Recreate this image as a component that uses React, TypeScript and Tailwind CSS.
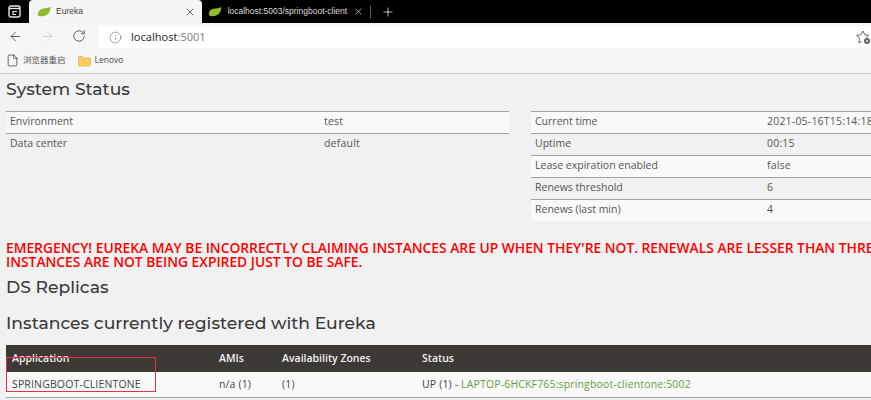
import { ArrowLeft, ArrowRight, RotateCw, Info, File, X, Plus } from 'lucide-react'

function SpringLeaf() {
  return (
    <svg width="14" height="11" viewBox="0 0 14 11">
      <path d="M13.500 .5c.3 3.500-1 7-4.500 8.800-2.500 1.300-5.500 1.200-7.800.4C.3 7 1.500 4 4.800 2.900 7.800 1.900 11.500 2.600 13.500 .5z" fill="#8fbb2e" />
    </svg>
  )
}

function TabActions() {
  return (
    <svg width="13" height="13" viewBox="0 0 13 13" fill="none" stroke="#e8e8e8" strokeWidth="1.400">
      <rect x="1" y="1" width="11" height="11" rx="2" />
      <path d="M1 3.500h11" />
      <path d="M9 6.500H5v3h3" strokeWidth="1.200" />
    </svg>
  )
}

function FavStar() {
  return (
    <svg width="15" height="15" viewBox="0 0 15 15" fill="none">
      <path d="M7 1l1.800 3.800 4 .6-2.800 2.800M5.500 11.500l-2.600 1.400.7-4.300L.8 5.400l4-.6L7 1" stroke="#666" strokeWidth="1" />
      <circle cx="11" cy="11" r="3" fill="#666" />
      <circle cx="11" cy="11" r="1" fill="#eee" />
    </svg>
  )
}

function Row({ label, value, odd, wide }: { label: string; value: string; odd: boolean; wide?: boolean }) {
  return (
    <div className={`flex h-[22px] items-center border-t border-[#a0a0a0] pb-[2px] pl-1 text-[10.5px] text-[#555] ${odd ? 'bg-[#f9f9f9]' : ''}`}>
      <span className={wide ? 'w-[232px] shrink-0' : 'w-[314px] shrink-0'}>{label}</span>
      <span className="whitespace-nowrap tracking-[0.2px]">{value}</span>
    </div>
  )
}

export default function App() {
  return (
    <div className="flex h-[400px] w-[871px] flex-col overflow-hidden bg-[#f1f1f1]">
      {/* browser chrome */}
      <div className="flex h-[23px] shrink-0 items-end bg-black font-['Liberation_Sans',sans-serif]">
        <div className="flex h-[23px] w-[29px] items-center justify-center">
          <TabActions />
        </div>
        <div className="flex h-[23px] w-[173px] items-center rounded-t-[4px] bg-[#f5f5f5] pl-[8px] pr-[6px]">
          <SpringLeaf />
          <span className="ml-[5px] flex-1 text-[8.5px] text-[#444]">Eureka</span>
          <X size={12} strokeWidth={1.5} className="text-[#333]" />
        </div>
        <div className="flex h-[23px] w-[169px] items-center pl-[6px]">
          <SpringLeaf />
          <span className="ml-[6px] w-[125px] overflow-hidden whitespace-nowrap text-[8.5px] text-[#ddd]">localhost:5003/springboot-client</span>
          <X size={11} strokeWidth={1.5} className="ml-[4px] text-[#ddd]" />
          <div className="ml-[6px] h-[14px] w-px bg-[#555]" />
        </div>
        <div className="flex h-[23px] items-center pl-[10px]">
          <Plus size={14} strokeWidth={1.3} className="text-[#eee]" />
        </div>
      </div>

      <div className="flex h-[25px] shrink-0 items-end bg-[#f6f6f6] font-['Noto_Sans',sans-serif]">
        <div className="flex h-[25px] items-center pt-[1px]">
          <ArrowLeft size={15} strokeWidth={1.3} className="ml-[8px] text-[#444]" />
          <ArrowRight size={15} strokeWidth={1.3} className="ml-[17px] text-[#ccc]" />
          <RotateCw size={14} strokeWidth={1.4} className="ml-[17px] text-[#444]" />
        </div>
        <div className="ml-[13px] flex h-[22px] flex-1 items-center bg-white pl-[10px]">
          <Info size={13} strokeWidth={1.1} className="text-[#666]" />
          <span className="ml-[9px] flex-1 text-[11px] text-[#333]">
            localhost<span className="text-[#888]">:5001</span>
          </span>
          <FavStar />
        </div>
      </div>

      <div className="flex h-[26px] shrink-0 items-center border-b border-[#cfcfcf] bg-[#f6f6f6] pl-[6px] font-['Noto_Sans','Noto_Sans_CJK_SC',sans-serif] text-[8.5px] text-[#555]">
        <File size={13} strokeWidth={1.3} className="text-[#333]" />
        <span className="ml-[4px]">浏览器重启</span>
        <svg className="ml-[12px]" width="13" height="12" viewBox="0 0 13 12">
          <path d="M.5 2.500a1 1 0 0 1 1-1h3l1.500 1.500h5.500a1 1 0 0 1 1 1v6a1 1 0 0 1-1 1h-10a1 1 0 0 1-1-1z" fill="#f8cd5e" stroke="#d9a93a" strokeWidth=".6" />
        </svg>
        <span className="ml-[4px]">Lenovo</span>
      </div>

      {/* eureka page */}
      <div className="min-w-0 flex-1 pl-[6px] font-['Open_Sans',sans-serif]">
        <h2 className="mt-[3px] font-['Montserrat','Open_Sans',sans-serif] text-[17.2px] leading-[24px] font-medium text-[#3a3a3a]">System Status</h2>

        <div className="mt-[10px] flex items-start">
          <div className="w-[503px] shrink-0">
            <Row label="Environment" value="test" odd />
            <Row label="Data center" value="default" odd={false} />
          </div>
          <div className="ml-[22px] w-[340px] shrink-0">
            <Row wide label="Current time" value="2021-05-16T15:14:18" odd />
            <Row wide label="Uptime" value="00:15" odd={false} />
            <Row wide label="Lease expiration enabled" value="false" odd />
            <Row wide label="Renews threshold" value="6" odd={false} />
            <Row wide label="Renews (last min)" value="4" odd />
          </div>
        </div>

        <p className="mt-[20px] w-[1200px] text-[13.8px] leading-[14px] font-semibold text-[#ff0000]">
          EMERGENCY! EUREKA MAY BE INCORRECTLY CLAIMING INSTANCES ARE UP WHEN THEY'RE NOT. RENEWALS ARE LESSER THAN THRESHOLD AND HENCE THE
          <br />
          INSTANCES ARE NOT BEING EXPIRED JUST TO BE SAFE.
        </p>

        <h2 className="mt-[6px] font-['Montserrat','Open_Sans',sans-serif] text-[17.2px] leading-[24px] font-medium text-[#3a3a3a]">DS Replicas</h2>
        <h2 className="mt-[12px] font-['Montserrat','Open_Sans',sans-serif] text-[17.2px] leading-[24px] font-medium text-[#3a3a3a]">Instances currently registered with Eureka</h2>

        <div className="relative mt-[10px]">
          <div className="flex h-[27px] items-center bg-[#3d3934] pl-[6px] text-[10.5px] font-semibold text-[#f1f1f1]">
            <span className="w-[207px]">Application</span>
            <span className="w-[63px]">AMIs</span>
            <span className="w-[140px]">Availability Zones</span>
            <span>Status</span>
          </div>
          <div className="flex h-[26px] items-center border-b border-[#a0a0a0] bg-[#f9f9f9] pl-[6px] text-[10.5px] tracking-[0.15px] text-[#444]">
            <span className="w-[207px]">SPRINGBOOT-CLIENTONE</span>
            <span className="w-[63px]">n/a (1)</span>
            <span className="w-[140px]">(1)</span>
            <span>
              UP (1) - <span className="text-[#6b9a3c]">LAPTOP-6HCKF765:springboot-clientone:5002</span>
            </span>
          </div>
          {/* red annotation box */}
          <div className="absolute left-0 top-[12px] h-[35px] w-[150px] border border-[#e8303f]" />
        </div>
      </div>
    </div>
  )
}
